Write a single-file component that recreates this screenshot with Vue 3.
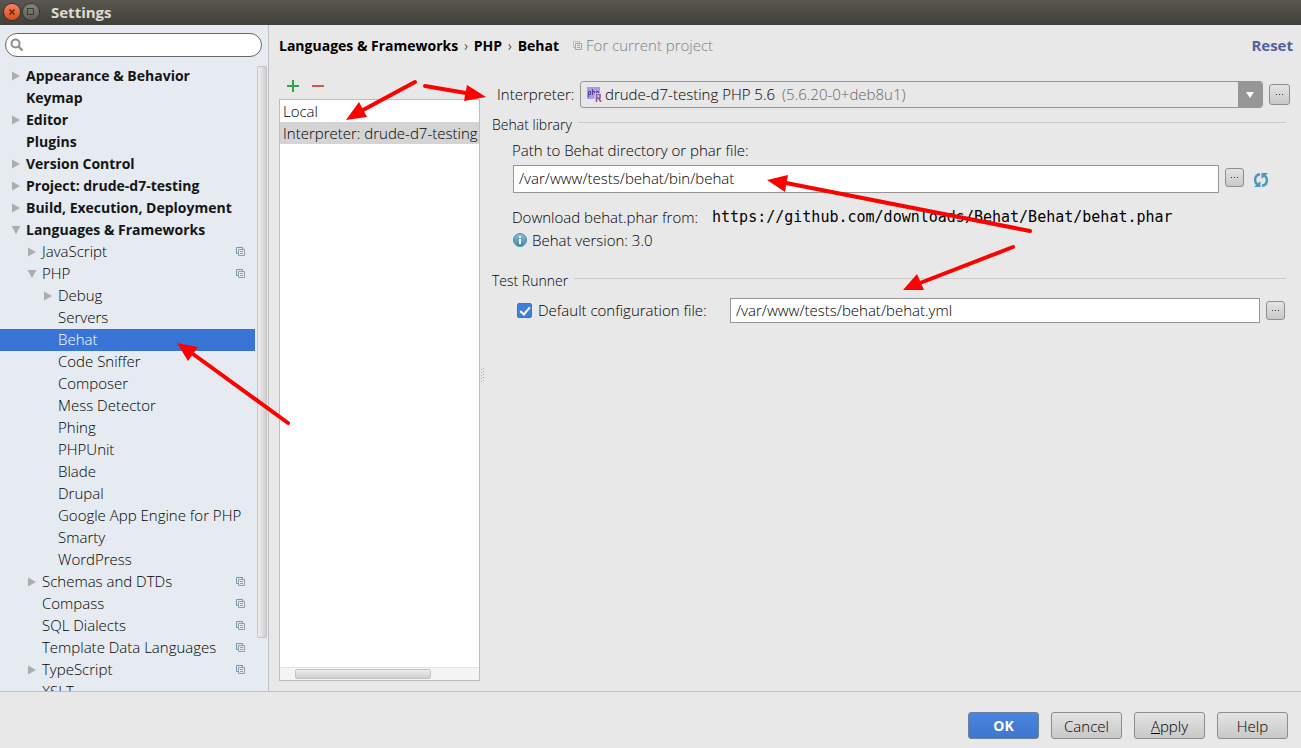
<script setup>
import { ref } from 'vue'

const tree = [
  { label: 'Appearance & Behavior', level: 0, arrow: 'right' },
  { label: 'Keymap', level: 0 },
  { label: 'Editor', level: 0, arrow: 'right' },
  { label: 'Plugins', level: 0 },
  { label: 'Version Control', level: 0, arrow: 'right' },
  { label: 'Project: drude-d7-testing', level: 0, arrow: 'right' },
  { label: 'Build, Execution, Deployment', level: 0, arrow: 'right' },
  { label: 'Languages & Frameworks', level: 0, arrow: 'down' },
  { label: 'JavaScript', level: 1, arrow: 'right', shared: true },
  { label: 'PHP', level: 1, arrow: 'down', shared: true },
  { label: 'Debug', level: 2, arrow: 'right' },
  { label: 'Servers', level: 2 },
  { label: 'Behat', level: 2 },
  { label: 'Code Sniffer', level: 2 },
  { label: 'Composer', level: 2 },
  { label: 'Mess Detector', level: 2 },
  { label: 'Phing', level: 2 },
  { label: 'PHPUnit', level: 2 },
  { label: 'Blade', level: 2 },
  { label: 'Drupal', level: 2 },
  { label: 'Google App Engine for PHP', level: 2 },
  { label: 'Smarty', level: 2 },
  { label: 'WordPress', level: 2 },
  { label: 'Schemas and DTDs', level: 1, arrow: 'right', shared: true },
  { label: 'Compass', level: 1, shared: true },
  { label: 'SQL Dialects', level: 1, shared: true },
  { label: 'Template Data Languages', level: 1, shared: true },
  { label: 'TypeScript', level: 1, arrow: 'right', shared: true },
  { label: 'XSLT', level: 1 },
]
const selected = ref('Behat')
const search = ref('')
const configs = ['Local', 'Interpreter: drude-d7-testing']
const activeConfig = ref(1)
const binPath = ref('/var/www/tests/behat/bin/behat')
const useConfig = ref(true)
const configPath = ref('/var/www/tests/behat/behat.yml')

const arrows = [
  { from: [415, 82], to: [363, 110], head: '346,120 359,102 367,117' },
  { from: [425, 86], to: [466, 93], head: '486,97 467,85 464,101' },
  { from: [1030, 231], to: [786, 183], head: '767,180 788,175 785,192' },
  { from: [1013, 247], to: [920, 283], head: '903,290 917,274 924,290' },
  { from: [288, 423], to: [193, 354], head: '177,343 198,347 188,361' },
]
</script>

<template>
  <div class="window">
    <header class="titlebar">
      <button class="win-btn close" aria-label="Close">
        <svg width="16" height="16" viewBox="0 0 16 16"><path d="M5.5 5.5l5 5M10.5 5.5l-5 5" stroke="#5c2410" stroke-width="1.4" /></svg>
      </button>
      <button class="win-btn max" aria-label="Maximize">
        <svg width="16" height="16" viewBox="0 0 16 16"><rect x="4.5" y="4.5" width="6" height="6" fill="none" stroke="#3c3b37" /></svg>
      </button>
      <h1>Settings</h1>
    </header>

    <div class="body">
      <aside class="sidebar">
        <label class="search">
          <svg width="14" height="14" viewBox="0 0 14 14" fill="none" stroke="#8e8e8e"><circle cx="5.5" cy="5.5" r="4" stroke-width="2" /><path d="M8.500 8.500l4 4" stroke-width="2.4" /></svg>
          <input v-model="search" type="text" aria-label="Search settings" />
        </label>
        <div class="tree-wrap">
          <ul class="tree">
            <li
              v-for="item in tree"
              :key="item.label"
              :class="['node', 'level-' + item.level, { selected: item.label === selected }]"
              @click="selected = item.label"
            >
              <span class="twisty">
                <svg v-if="item.arrow === 'right'" width="10" height="10" viewBox="0 0 10 10"><path d="M1 .5v9L9 5z" fill="#adadad" /></svg>
                <svg v-else-if="item.arrow === 'down'" width="10" height="10" viewBox="0 0 10 10"><path d="M.5 1h9L5 9z" fill="#adadad" /></svg>
              </span>
              <span class="node-label">{{ item.label }}</span>
              <svg v-if="item.shared" class="shared" width="10" height="10" viewBox="0 0 10 10" fill="none"><path d="M2 6.5H.5v-6h6V2" stroke="#589fc0" /><path d="M2.5 2.5h6v6h-6zM4 4.5h3M4 6.5h3" stroke="#9c9c9c" /></svg>
            </li>
          </ul>
          <div class="vscroll"><div class="vthumb"></div></div>
        </div>
      </aside>

      <main class="main">
        <div class="crumbs">
          <strong>Languages &amp; Frameworks</strong><span class="sep">›</span>
          <strong>PHP</strong><span class="sep">›</span>
          <strong>Behat</strong>
          <svg class="crumb-icon" width="10" height="10" viewBox="0 0 10 10" fill="none"><path d="M2 6.5H.5v-6h6V2" stroke="#a9bfca" /><path d="M2.5 2.5h6v6h-6zM4 4.5h3M4 6.5h3" stroke="#a5a5a5" /></svg>
          <span class="scope">For current project</span>
          <a class="reset" href="#">Reset</a>
        </div>

        <div class="panes">
          <section class="configs">
            <div class="tools">
              <button aria-label="Add">
                <svg width="12" height="12" viewBox="0 0 12 12"><path d="M6 0v12M0 6h12" stroke="#2ea44f" stroke-width="2" /></svg>
              </button>
              <button aria-label="Remove">
                <svg width="12" height="12" viewBox="0 0 12 12"><path d="M0 6h12" stroke="#d0564f" stroke-width="2" /></svg>
              </button>
            </div>
            <div class="list">
              <ul>
                <li v-for="(c, i) in configs" :key="c" :class="{ active: i === activeConfig }" @click="activeConfig = i">{{ c }}</li>
              </ul>
              <div class="hscroll"><div class="hthumb"></div></div>
            </div>
          </section>

          <div class="splitter">
            <svg width="5" height="16" viewBox="0 0 5 16" fill="#a8a8a8"><path d="M0 1h1v1H0zM2 0h1v1H2zM0 4h1v1H0zM2 3h1v1H2zM0 7h1v1H0zM2 6h1v1H2zM0 10h1v1H0zM2 9h1v1H2zM0 13h1v1H0zM2 12h1v1H2z" /></svg>
          </div>

          <form class="details" @submit.prevent>
            <div class="row interpreter">
              <label for="interp">Interpreter:</label>
              <div class="combo">
                <svg class="php" width="15" height="15" viewBox="0 0 15 15">
                  <rect width="13" height="12" fill="#a99bea" />
                  <g fill="none" stroke="#54428f" stroke-width="1">
                    <path d="M1.5 10V4.500h2v3h-2M5.500 2v6M5.500 4.500h2V8M9.500 10V4.500h2v3h-2" />
                  </g>
                  <path d="M9 14.500V7.500h3.500v3.500H9M11.500 11l2.500 3.500" fill="none" stroke="#e8e0ee" stroke-width="3" />
                  <path d="M9.500 15V7.500h3.500v3.500H9.500M11.500 11l2.500 4" fill="none" stroke="#8a5a9c" stroke-width="1.6" />
                </svg>
                <select id="interp"><option>drude-d7-testing PHP 5.6</option></select>
                <span class="version">(5.6.20-0+deb8u1)</span>
                <span class="drop"><svg width="8" height="6" viewBox="0 0 8 6"><path d="M0 0h8L4 6z" fill="#fff" /></svg></span>
              </div>
              <button class="dots big" aria-label="Manage interpreters"><i></i><i></i><i></i></button>
            </div>

            <div class="group"><span>Behat library</span><hr /></div>
            <label class="path-label" for="bin">Path to Behat directory or phar file:</label>
            <div class="row path">
              <input id="bin" v-model="binPath" class="field" type="text" />
              <button class="dots" aria-label="Browse"><i></i><i></i><i></i></button>
              <button class="refresh" aria-label="Refresh">
                <svg width="14" height="14" viewBox="0 0 14 14"><g fill="none" stroke="#4a97bf" stroke-width="2.4"><path d="M6 1.200C0 2 0 9 3.500 11.500" /><path d="M8 12.800c6-.8 6-7.800 2.500-10.300" /></g><path d="M0 14h6.500V8zM14 0H7.500v6z" fill="#4a97bf" /></svg>
              </button>
            </div>
            <p class="download"><span>Download behat.phar from:</span> <code>https://github.com/downloads/Behat/Behat/behat.phar</code></p>
            <p class="info">
              <svg width="14" height="14" viewBox="0 0 14 14"><defs><linearGradient id="blue" x2="0" y2="1"><stop stop-color="#8ac0dc" /><stop offset="1" stop-color="#3f86ac" /></linearGradient></defs><circle cx="7" cy="7" r="6.500" fill="url(#blue)" stroke="#4f8fb2" /><path d="M6 3h2v2H6zM6 6h2v5H6z" fill="#fff" /></svg>
              <span>Behat version: 3.0</span>
            </p>

            <div class="group runner"><span>Test Runner</span><hr /></div>
            <div class="row conf">
              <input id="useconf" v-model="useConfig" class="check" type="checkbox" />
              <label for="useconf">Default configuration file:</label>
              <input v-model="configPath" class="field" type="text" aria-label="Configuration file path" />
              <button class="dots" aria-label="Browse configuration"><i></i><i></i><i></i></button>
            </div>
          </form>
        </div>
      </main>
    </div>

    <footer class="footer">
      <button class="btn primary">OK</button>
      <button class="btn">Cancel</button>
      <button class="btn"><u>A</u>pply</button>
      <button class="btn">Help</button>
    </footer>

    <svg class="annotations" aria-hidden="true">
      <g v-for="a in arrows" :key="a.head" fill="#f00" stroke="#f00">
        <line :x1="a.from[0]" :y1="a.from[1]" :x2="a.to[0]" :y2="a.to[1]" stroke-width="4" stroke-linecap="round" />
        <polygon :points="a.head" stroke="none" />
      </g>
    </svg>
  </div>
</template>

<style>
body { margin: 0; }
</style>

<style scoped>
* { box-sizing: border-box; }
.window {
  position: relative;
  display: flex;
  flex-direction: column;
  height: 100vh;
  overflow: hidden;
  background: #e8e8e8;
  color: #000;
  font: 300 15px/22px "Open Sans", "Noto Sans", sans-serif;
}
button, input, select { font: inherit; color: inherit; margin: 0; padding: 0; }
button { border: 0; background: none; }
ul { list-style: none; margin: 0; padding: 0; }
p { margin: 0; }
svg { display: block; flex: none; }

.titlebar {
  display: flex;
  align-items: center;
  flex: none;
  gap: 3px;
  height: 25px;
  padding: 0 4px 2px;
  background: linear-gradient(#59574f, #403f3a);
}
.titlebar h1 { margin: 0 0 0 9px; font-size: 15px; font-weight: 700; color: #dfdbd2; }
.win-btn { width: 16px; height: 16px; border-radius: 50%; box-shadow: 0 0 0 1px #35342f; }
.close { background: linear-gradient(#f58462, #df4a16); }
.max { background: linear-gradient(#85837a, #5f5d56); }

.body { display: flex; flex: 1; min-height: 0; }
.sidebar {
  display: flex;
  flex-direction: column;
  flex: none;
  width: 269px;
  border-right: 1px solid #c0c0c0;
  background: #e5ebf0;
}
.search {
  display: flex;
  align-items: center;
  gap: 4px;
  flex: none;
  height: 24px;
  margin: 8px 6px 8px 5px;
  padding: 0 10px 0 4px;
  border: 1px solid #666;
  border-radius: 12px;
  background: #fff;
}
.search input { flex: 1; min-width: 0; border: 0; outline: 0; background: none; }
.tree-wrap { display: flex; flex: 1; min-height: 0; overflow: hidden; }
.tree { width: 255px; }
.node { display: flex; align-items: center; height: 22px; padding-right: 9px; white-space: nowrap; }
.level-0 { padding-left: 11px; font-weight: 700; font-size: 14px; color: #151515; }
.level-1 { padding-left: 27px; }
.level-2 { padding-left: 43px; }
.twisty { width: 15px; }
.node-label { flex: 1; }
.level-1 .node-label, .level-2 .node-label { padding-bottom: 2px; }
.selected { background: #3875d7; color: #fff; }
.vscroll { width: 10px; margin: 1px 0 0 2px; }
.vthumb {
  height: calc(100% - 53px);
  border: 1px solid #c3c3c3;
  border-radius: 2px;
  background: linear-gradient(90deg, #eee, #cfcfcf);
}

.main { display: flex; flex-direction: column; flex: 1; min-width: 0; padding: 10px 8px 10px 10px; }
.crumbs { display: flex; align-items: center; height: 22px; color: #000; font-size: 14px; white-space: nowrap; }
.crumbs strong { font-weight: 700; }
.sep { margin: 0 6px; }
.crumb-icon { margin: 0 3px 0 14px; }
.scope { padding-bottom: 2px; color: #808080; font-size: 15px; }
.reset { margin-left: auto; padding-bottom: 2px; color: #5060a0; font-size: 15px; font-weight: 700; text-decoration: none; }

.panes { display: flex; flex: 1; min-height: 0; padding-top: 19px; }
.configs { display: flex; flex-direction: column; flex: none; width: 201px; }
.tools { display: flex; gap: 13px; padding: 4px 8px 7px; }
.list {
  display: flex;
  flex-direction: column;
  flex: 1;
  border: 1px solid #bdbdbd;
  background: #fff;
  overflow: hidden;
}
.list ul { flex: 1; }
.list li { padding-left: 3px; height: 22px; overflow: hidden; white-space: nowrap; }
.list .active { background: #d4d4d4; }
.hscroll { height: 13px; padding: 1px 15px; border-top: 1px solid #e2e2e2; background: #f4f4f4; }
.hthumb {
  width: 136px;
  height: 10px;
  border: 1px solid #c3c3c3;
  border-radius: 2px;
  background: linear-gradient(#ededed, #cfcfcf);
}
.splitter { display: flex; align-items: center; flex: none; width: 12px; padding: 0 1px 6px; }

.details { display: flex; flex-direction: column; flex: 1; min-width: 0; padding: 5px 0 0; white-space: nowrap; }
.row { display: flex; align-items: center; }
.interpreter { padding: 0 3px 0 5px; gap: 6px; }
.interpreter label { width: 77px; padding-bottom: 2px; }
.combo {
  display: flex;
  align-items: center;
  flex: 1;
  min-width: 0;
  height: 27px;
  padding-left: 6px;
  border: 1px solid #969696;
  border-radius: 3px;
  overflow: hidden;
}
.combo select { appearance: none; height: 24px; padding-bottom: 2px; margin-left: 3px; border: 0; outline: 0; background: none; color: #000; }
.version { margin-left: 6px; padding-bottom: 2px; color: #666; }
.drop {
  display: flex;
  align-items: center;
  justify-content: center;
  width: 24px;
  height: 27px;
  margin-left: auto;
  background: #969696;
}
.dots {
  display: flex;
  align-items: center;
  justify-content: center;
  gap: 2px;
  flex: none;
  width: 19px;
  height: 19px;
  border: 1px solid #8e8e8e;
  border-radius: 3px;
  background: linear-gradient(#e4e4e4, #c8c8c8);
}
.dots i { width: 1px; height: 1px; background: #333; }
.path .dots { margin-bottom: 3px; }
.big { width: 21px; height: 21px; }
.group { display: flex; align-items: center; gap: 6px; height: 22px; margin-top: 5px; padding-right: 7px; font-size: 14px; }
.group span { padding-top: 1px; }
.group hr { flex: 1; margin: 0 0 4px; border: 0; border-top: 1px solid #c9c9c9; }
.path-label { margin: 4px 0 4px 20px; }
.field {
  flex: 1;
  min-width: 0;
  height: 28px;
  padding: 0 5px 2px;
  border: 1px solid #969696;
  outline: 0;
  background: #fff;
  color: #000;
}
.path { padding: 0 25px 0 21px; gap: 6px; }
.refresh { margin: 2px 0 0 4px; }
.download { display: flex; gap: 14px; margin: 13px 0 0 20px; }
.download code { color: #000; font: 400 15px/22px "DejaVu Sans Mono", monospace; }
.info { display: flex; align-items: center; gap: 5px; margin: 1px 0 0 21px; }
.runner { margin-top: 18px; }
.conf { margin-top: 7px; padding: 0 8px 0 25px; gap: 6px; }
.conf label { width: 186px; padding-bottom: 2px; }
.conf .field { height: 25px; }
.check {
  appearance: none;
  display: flex;
  align-items: center;
  justify-content: center;
  flex: none;
  width: 15px;
  height: 15px;
  border: 1px solid #8a8a8a;
  border-radius: 2px;
  background: #fff;
}
.check:checked { border-color: #3a76d0; background: #3f80de; }
.check:checked::after {
  content: "";
  width: 4px;
  height: 8px;
  margin-bottom: 2px;
  border: solid #fff;
  border-width: 0 2px 2px 0;
  transform: rotate(40deg);
}

.footer {
  display: flex;
  justify-content: flex-end;
  flex: none;
  gap: 12px;
  padding: 20px 13px 9px;
  border-top: 1px solid #c0c0c0;
}
.btn {
  width: 71px;
  height: 27px;
  border: 1px solid #8e8e8e;
  border-radius: 3px;
  background: linear-gradient(#e4e4e4, #c8c8c8);
  color: #000;
}
.primary { border-color: #6b7f9f; background: linear-gradient(#4a85e2, #4076cc); color: #fff; font-size: 14px; font-weight: 700; }
.annotations { position: absolute; top: 0; left: 0; width: 100%; height: 100%; pointer-events: none; }
</style>
